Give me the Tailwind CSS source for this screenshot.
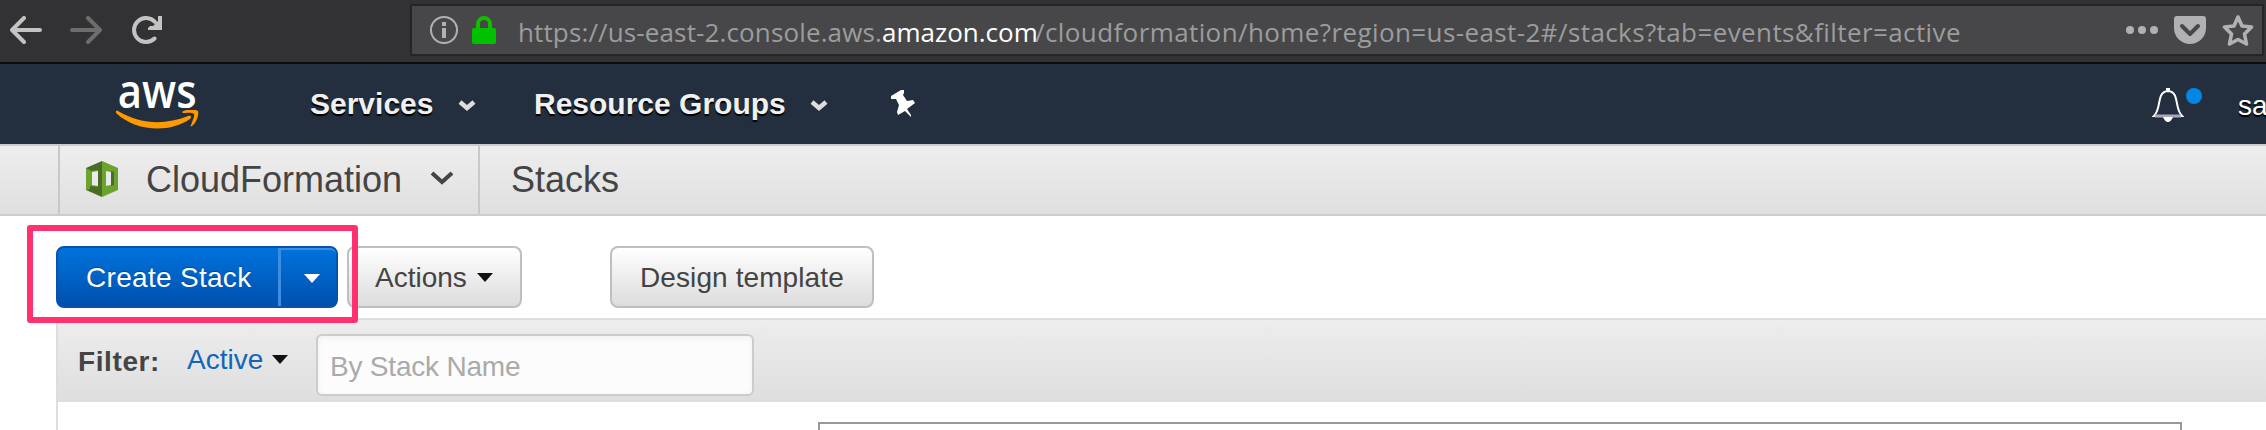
<!DOCTYPE html>
<html lang="en">
<head>
<meta charset="utf-8">
<title>CloudFormation - Stacks</title>
<script src="https://cdn.jsdelivr.net/npm/@tailwindcss/browser@4"></script>
</head>
<body class="w-[2266px] h-[430px] overflow-hidden bg-white font-['Liberation_Sans',Arial,sans-serif] text-[#444] whitespace-nowrap">

<!-- Browser toolbar -->
<div class="h-16 flex items-start bg-[#323234] border-b-2 border-[#0c0c0d] pt-1">
  <div class="flex w-[410px] h-[52px] items-center pl-[10px]">
    <svg class="w-8 h-7 mr-7" viewBox="0 0 32 28" fill="none" stroke="#c3c3c4" stroke-width="4" stroke-linecap="round" stroke-linejoin="round"><path d="M14 2L2 14l12 12M2 14h28"/></svg>
    <svg class="w-8 h-7 mr-[30px]" viewBox="0 0 32 28" fill="none" stroke="#6d6d6e" stroke-width="4" stroke-linecap="round" stroke-linejoin="round"><path d="M18 2l12 12-12 12M30 14H2"/></svg>
    <svg class="w-[30px] h-7" viewBox="0 0 30 28" fill="none" stroke="#c3c3c4" stroke-width="4" stroke-linecap="round"><path d="M22.500 22.500A12 12 0 1 1 23 6"/><path d="M30 0v14H16v-2l2-2h3l5-5V0z" fill="#c3c3c4" stroke="none"/></svg>
  </div>
  <div class="w-[1854px] h-[52px] flex items-center bg-[#474749] border-2 border-[#252526]">
    <svg class="w-7 h-7 ml-[18px] mr-[14px]" viewBox="0 0 28 28"><circle cx="14" cy="14" r="13" fill="none" stroke="#b1b1b3" stroke-width="2"/><path d="M12 6h4v4h-4zM12 12h4v10h-4z" fill="#b1b1b3"/></svg>
    <svg class="w-6 h-7" viewBox="0 0 24 28"><path d="M6 13V8a6 6 0 0 1 12 0v5" fill="none" stroke="#12bc00" stroke-width="4"/><rect y="12" width="24" height="16" rx="2" fill="#00c000"/></svg>
    <div class="w-[1602px] pl-[22px] pt-1 font-['Open_Sans',sans-serif] text-[26px] leading-9 text-[#9c9c9d] flex"><span class="inline-block w-[364px] tracking-[0.13px]">https://us-east-2.console.aws.</span><span class="inline-block w-[153px] text-white">amazon.com</span><span class="tracking-[0.4px]">/cloudformation/home?region=us-east-2#/stacks?tab=events&amp;filter=active</span></div>
    <svg class="w-8 h-2 mr-4 ml-auto" viewBox="0 0 32 8" fill="#b1b1b3"><circle cx="4" cy="4" r="4"/><circle cx="16" cy="4" r="4"/><circle cx="28" cy="4" r="4"/></svg>
    <svg class="w-8 h-7 mr-4" viewBox="0 0 32 28"><path d="M3 0h26q3 0 3 3v9a16 16 0 0 1-32 0V3q0-3 3-3z" fill="#b1b1b3"/><path d="M8 10l8 8 8-8" fill="none" stroke="#474749" stroke-width="4" stroke-linecap="round" stroke-linejoin="round"/></svg>
    <svg class="w-8 h-8 mr-2" viewBox="0 0 32 32" fill="none" stroke="#b1b1b3" stroke-width="3.6" stroke-linejoin="round"><path d="M16 3l4 9 9.500 1-7 7 2 10-8.500-4.500L7.500 30l2-10-7-7 9.500-1z"/></svg>
  </div>
</div>

<!-- AWS navigation -->
<div class="h-20 flex items-center bg-[#232f3e]">
  <div class="w-[82px] ml-[116px] h-full flex flex-col">
    <span class="block h-[46px] pt-px pl-[2px] origin-left scale-x-[0.89] font-['Open_Sans',sans-serif] font-semibold text-[47px] leading-[50px] text-white">aws</span>
    <svg class="w-[83px] h-[19px]" viewBox="0 0 83 19" fill="#ff9900"><path d="M0 1q1-1 2 0c24 14 47 14 70 5 3-1 4 1 2 3C54 23 20 22 0 3z"/><path d="M66 2c4-3 13-3 16-1 1 3-1 11-6 15-1 1-2 0-1-1 1-3 4-9 3-11-2-2-8-1-11-1z"/></svg>
  </div>
  <span class="ml-28 w-[148px] text-[30px] leading-8 font-bold text-[#f0f0f0] [text-shadow:0_2px_1px_#000]">Services</span>
  <svg class="w-[18px] h-3 mt-[3px]" viewBox="0 0 18 12" fill="none" stroke="#ddd" stroke-width="4.500"><path d="M2 2l7 6 7-6"/></svg>
  <span class="ml-[58px] w-[276px] text-[30px] leading-8 font-bold text-[#f0f0f0] [text-shadow:0_2px_1px_#000]">Resource Groups</span>
  <svg class="w-[18px] h-3 mt-[3px]" viewBox="0 0 18 12" fill="none" stroke="#ddd" stroke-width="4.500"><path d="M2 2l7 6 7-6"/></svg>
  <svg class="w-6 h-7 ml-[63px]" viewBox="0 0 24 28" fill="#fff"><path d="M0 6l10-6h3v3l-1 2 4 6 6-1 2 3-8 6 4 6v2l-6-6-7 4-1-3 2-7-3-6H0z"/></svg>
  <svg class="w-8 h-[34px] ml-auto mt-[2px]" viewBox="0 0 32 34"><path d="M2 28c8-8 2-24 14-25 12 1 6 17 14 25z" fill="none" stroke="#fff" stroke-width="2"/><path d="M3 28h26" stroke="#aab" stroke-width="3"/><path d="M11 29h10q-2 5-5 5t-5-5zM14 0h4v4h-4z" fill="#fff"/></svg>
  <div class="w-4 h-4 rounded-full bg-[#0486e4] ml-[2px] mb-4"></div>
  <span class="ml-[36px] w-[28px] overflow-hidden text-[28px] leading-9 pt-1 text-white [text-shadow:0_2px_1px_#000]">sa</span>
</div>

<!-- Service breadcrumb -->
<div class="h-[72px] flex border-y-2 border-[#ccc] bg-linear-to-b from-[#eee] to-[#dfdfdf] text-[36px]">
  <div class="ml-[58px] w-[422px] flex items-center border-x-2 border-[#c8c8c8]">
    <svg class="w-8 h-9 ml-[26px] mr-7 -mt-[3px]" viewBox="0 0 32 36"><path d="M16 0L0 7v22l16 7z" fill="#4b6b28"/><path d="M16 0l16 7v22l-16 7z" fill="#6aa42c"/><path d="M0 7l4 2v19l-4 1z" fill="#6aa42c"/><path d="M4 10l8-1v17l-8-1z" fill="#6aa42c"/><path d="M6 11l6-1v15l-6-1zM20 10l5 1v13l-5 1z" fill="#eaeaea"/><path d="M25 10l3 1v13l-3 1z" fill="#4b6b28"/></svg>
    <span class="w-[284px] leading-10">CloudFormation</span>
    <svg class="w-6 h-[14px] -mt-[5px]" viewBox="0 0 24 14" fill="none" stroke="#444" stroke-width="4"><path d="M2 2l10 9L22 2"/></svg>
  </div>
  <span class="ml-[31px] leading-[68px]">Stacks</span>
</div>

<!-- Stack actions -->
<div class="h-[102px] pt-[30px] pl-14 flex items-start text-[28px] relative">
  <div class="flex w-[282px] h-[62px] rounded-lg border-2 border-[#0852ab] bg-linear-to-b from-[#0073dd] to-[#0050ae] text-white">
    <span class="w-[220px] pl-7 leading-[60px] tracking-[0.3px] [text-shadow:0_-1px_1px_#0004]">Create Stack</span>
    <div class="flex-1 flex items-center justify-center border-l-3 border-t-2 border-[#3d8de0] rounded-tr-md"><svg class="w-4 h-[9px] ml-[6px]" viewBox="0 0 16 9"><path d="M0 0h16L8 9z" fill="#fff"/></svg></div>
  </div>
  <div class="ml-[9px] w-[175px] h-[62px] flex items-center pl-[26px] rounded-lg border-2 border-[#bfbfbf] bg-linear-to-b from-white to-[#dcdcdc]"><span class="w-[102px] pt-[2px]">Actions</span><svg class="w-4 h-[9px]" viewBox="0 0 16 9"><path d="M0 0h16L8 9z" fill="#111"/></svg></div>
  <div class="ml-[88px] w-[264px] h-[62px] pl-7 leading-[60px] tracking-[0.1px] rounded-lg border-2 border-[#bfbfbf] bg-linear-to-b from-white to-[#dcdcdc]">Design template</div>
  <div class="absolute left-[27px] top-[9px] w-[331px] h-[98px] border-6 border-[#ff316e] rounded-[3px]"></div>
</div>

<!-- Stack list -->
<div class="ml-14 h-28 border-l-2 border-t-2 border-[#ddd]">
  <div class="h-[82px] flex bg-linear-to-b from-[#ededed] to-[#dedede] text-[28px]">
    <span class="ml-5 mt-[26px] w-[109px] leading-8 font-bold tracking-[0.6px]">Filter:</span>
    <span class="mt-6 w-[85px] leading-8 text-[#1166bb]">Active</span>
    <svg class="w-4 h-[9px] mt-[35px]" viewBox="0 0 16 9"><path d="M0 0h16L8 9z" fill="#111"/></svg>
    <div class="ml-[28px] mt-[14px] w-[438px] h-[62px] pl-3 leading-[61px] tracking-[-0.2px] rounded-md border-2 border-[#ccc] bg-[#fcfcfc] shadow-[inset_0_2px_6px_#0000000d] text-[#aaa]">By Stack Name</div>
  </div>
  <div class="mt-5 ml-[760px] w-[1364px] h-2 border-2 border-b-0 border-[#999]"></div>
</div>
</body>
</html>
